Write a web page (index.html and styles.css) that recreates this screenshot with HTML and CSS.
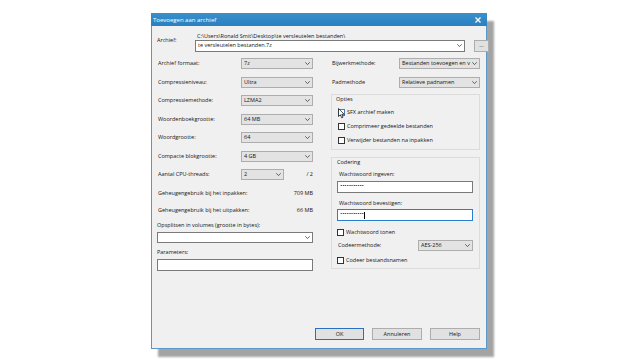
FILE: index.html
```html
<!DOCTYPE html>
<html>
<head>
<meta charset="utf-8">
<link rel="stylesheet" href="styles.css">
</head>
<body>
<div class="stage">
  <div class="dialog">
    <div class="titlebar">
      <span class="title">Toevoegen aan archief</span>
      <svg class="close" viewBox="0 0 6 6" width="6" height="6"><path d="M0.5 0.5 L5.5 5.5 M5.5 0.5 L0.5 5.5"/></svg>
    </div>
    <div class="client">
      <div class="archive">
        <span class="lbl arch-lbl">Archief:</span>
        <div class="arch-main">
          <div class="path">C:\Users\Ronald Smit\Desktop\te versleutelen bestanden\</div>
          <div class="combo edit"><span class="val">te versleutelen bestanden.7z</span><svg class="chev" viewBox="0 0 5 3" width="5" height="3"><polyline points="0.3,0.3 2.5,2.6 4.7,0.3"/></svg></div>
        </div>
        <div class="btn browse">...</div>
      </div>

      <div class="cols">
        <div class="col left">
          <div class="row"><span class="lbl">Archief formaat:</span><div class="combo sel"><span class="val">7z</span><svg class="chev" viewBox="0 0 5 3" width="5" height="3"><polyline points="0.3,0.3 2.5,2.6 4.7,0.3"/></svg></div></div>
          <div class="row"><span class="lbl">Compressieniveau:</span><div class="combo sel"><span class="val">Ultra</span><svg class="chev" viewBox="0 0 5 3" width="5" height="3"><polyline points="0.3,0.3 2.5,2.6 4.7,0.3"/></svg></div></div>
          <div class="row"><span class="lbl">Compressiemethode:</span><div class="combo sel"><span class="val">LZMA2</span><svg class="chev" viewBox="0 0 5 3" width="5" height="3"><polyline points="0.3,0.3 2.5,2.6 4.7,0.3"/></svg></div></div>
          <div class="row"><span class="lbl">Woordenboekgrootte:</span><div class="combo sel"><span class="val">64 MB</span><svg class="chev" viewBox="0 0 5 3" width="5" height="3"><polyline points="0.3,0.3 2.5,2.6 4.7,0.3"/></svg></div></div>
          <div class="row"><span class="lbl">Woordgrootte:</span><div class="combo sel"><span class="val">64</span><svg class="chev" viewBox="0 0 5 3" width="5" height="3"><polyline points="0.3,0.3 2.5,2.6 4.7,0.3"/></svg></div></div>
          <div class="row"><span class="lbl">Compacte blokgrootte:</span><div class="combo sel"><span class="val">4 GB</span><svg class="chev" viewBox="0 0 5 3" width="5" height="3"><polyline points="0.3,0.3 2.5,2.6 4.7,0.3"/></svg></div></div>
          <div class="row"><span class="lbl">Aantal CPU-threads:</span><div class="cpu"><div class="combo sel short"><span class="val">2</span><svg class="chev" viewBox="0 0 5 3" width="5" height="3"><polyline points="0.3,0.3 2.5,2.6 4.7,0.3"/></svg></div><span class="lbl">/ 2</span></div></div>
          <div class="row mem"><span class="lbl">Geheugengebruik bij het inpakken:</span><span class="lbl">709 MB</span></div>
          <div class="row mem2"><span class="lbl">Geheugengebruik bij het uitpakken:</span><span class="lbl">66 MB</span></div>
          <div class="lbl stack-lbl first">Opsplitsen in volumes (grootte in bytes):</div>
          <div class="combo edit full"><span class="val"></span><svg class="chev" viewBox="0 0 5 3" width="5" height="3"><polyline points="0.3,0.3 2.5,2.6 4.7,0.3"/></svg></div>
          <div class="lbl stack-lbl second">Parameters:</div>
          <div class="input full"></div>
        </div>

        <div class="col right">
          <div class="row"><span class="lbl">Bijwerkmethode:</span><div class="combo sel rc"><span class="val">Bestanden toevoegen en v</span><svg class="chev" viewBox="0 0 5 3" width="5" height="3"><polyline points="0.3,0.3 2.5,2.6 4.7,0.3"/></svg></div></div>
          <div class="row"><span class="lbl">Padmethode</span><div class="combo sel rc"><span class="val">Relatieve padnamen</span><svg class="chev" viewBox="0 0 5 3" width="5" height="3"><polyline points="0.3,0.3 2.5,2.6 4.7,0.3"/></svg></div></div>

          <div class="group opties">
            <div class="glabel">Opties</div>
            <div class="chkrow r1"><span class="chk hover"></span><span class="lbl">SFX archief maken</span></div>
            <div class="chkrow r2"><span class="chk"></span><span class="lbl">Comprimeer gedeelde bestanden</span></div>
            <div class="chkrow r3"><span class="chk"></span><span class="lbl">Verwijder bestanden na inpakken</span></div>
            <svg class="cursor" viewBox="0 0 7 11" width="7" height="11"><path d="M0.5 0.5 L0.5 8.5 L2.4 6.8 L3.7 9.8 L5 9.2 L3.8 6.3 L6.2 6.3 Z"/></svg>
          </div>

          <div class="group codering">
            <div class="glabel">Codering</div>
            <div class="lbl pw-lbl first">Wachtwoord ingeven:</div>
            <div class="input pw"><span class="dots">•••••••••••</span></div>
            <div class="lbl pw-lbl second">Wachtwoord bevestigen:</div>
            <div class="input pw focus"><span class="dots">•••••••••••</span><span class="caret"></span></div>
            <div class="chkrow show"><span class="chk"></span><span class="lbl">Wachtwoord tonen</span></div>
            <div class="row method"><span class="lbl">Codeermethode:</span><div class="combo sel mc"><span class="val">AES-256</span><svg class="chev" viewBox="0 0 5 3" width="5" height="3"><polyline points="0.3,0.3 2.5,2.6 4.7,0.3"/></svg></div></div>
            <div class="chkrow names"><span class="chk"></span><span class="lbl">Codeer bestandsnamen</span></div>
          </div>
        </div>
      </div>

      <div class="buttons">
        <div class="btn default">OK</div>
        <div class="btn">Annuleren</div>
        <div class="btn">Help</div>
      </div>
    </div>
  </div>
</div>
</body>
</html>
```

FILE: styles.css
```css
* { box-sizing: border-box; }
html, body { margin: 0; padding: 0; background: #ffffff; }
body {
  width: 640px;
  height: 360px;
  overflow: hidden;
  font-family: "Open Sans", "Noto Sans", sans-serif;
  font-size: 5.5px;
  color: #161616;
}
.stage { padding: 13px 0 0 151px; }
.dialog {
  width: 336px;
  height: 336px;
  display: flex;
  flex-direction: column;
  box-shadow: 7px 8px 2px rgba(0, 0, 0, 0.36);
}
.titlebar {
  height: 13px;
  background: linear-gradient(#3a8fcb, #2a80c0);
  color: #ffffff;
  display: flex;
  align-items: center;
  justify-content: space-between;
  padding: 0 6px 0 2px;
  font-size: 6px;
}
.close { stroke: #ffffff; stroke-width: 1.3; fill: none; }
.client {
  flex: 1;
  background: #f0f0f0;
  border: 1px solid #5b97c8;
  border-top: none;
  padding: 0 6px 0 5px;
  display: flex;
  flex-direction: column;
}
.lbl { white-space: nowrap; line-height: 7px; }

.archive {
  display: grid;
  grid-template-columns: 29px 270px 15px;
  column-gap: 9px;
  padding-top: 6px;
  align-items: end;
}
.arch-lbl { align-self: start; margin-top: 5px; }
.path { line-height: 8px; height: 8px; white-space: nowrap; padding-left: 2px; }
.browse { height: 12px; }

.combo {
  height: 11px;
  border: 1px solid #adadad;
  background: #e3e3e3;
  display: flex;
  align-items: center;
  justify-content: space-between;
  padding: 0 2px 0 2px;
  overflow: hidden;
}
.combo .val { white-space: nowrap; line-height: 7px; }
.combo.edit { background: #ffffff; border-color: #7a7a7a; }
.archive .combo { height: 11.5px; }
.chev { flex: none; stroke: #404040; stroke-width: 0.8; fill: none; margin-left: 2px; }

.cols { display: flex; gap: 18px; margin-top: 3px; }
.col { display: flex; flex-direction: column; }
.col.left { width: 156px; }
.col.right { width: 150px; }
.row {
  height: 18.5px;
  display: flex;
  align-items: center;
  justify-content: space-between;
}
.left .row > .lbl:first-child { padding-left: 1px; }
.left .combo.sel { width: 72px; }
.left .combo.short { width: 43px; }
.cpu { width: 72px; display: flex; justify-content: space-between; align-items: center; }
.row.mem { height: 18px; }
.row.mem2 { height: 17.5px; }
.stack-lbl.first { margin-top: 2.5px; }
.stack-lbl.second { margin-top: 6.5px; }
.combo.full { margin-top: 2.5px; width: 156px; }
.input {
  height: 12px;
  background: #ffffff;
  border: 1px solid #7a7a7a;
  display: flex;
  align-items: center;
  padding-left: 2px;
}
.input.full { margin-top: 2.5px; width: 156px; }
.input.focus { border-color: #2a7fd0; }

.right .row > .lbl:first-child { padding-left: 1px; }
.combo.rc { width: 81px; }

.group {
  border: 1px solid #dcdcdc;
  display: flex;
  flex-direction: column;
  position: relative;
}
.group.opties { margin-top: 2.5px; height: 55.5px; padding: 1px 6px 0 4px; }
.group.codering { margin-top: 7.5px; height: 111.5px; padding: 0.5px 6px 0 5px; }
.glabel { line-height: 7px; }
.chkrow { display: flex; align-items: center; gap: 2px; }
.opties .chkrow { height: 14px; padding-left: 2px; }
.opties .r1 { margin-top: 3px; height: 13px; }
.opties .r3 { margin-top: 0.5px; }
.chk {
  width: 7px;
  height: 7px;
  border: 1px solid #333333;
  background: #ffffff;
  flex: none;
}
.chk.hover { border-color: #3d7fc4; }
.cursor {
  position: absolute;
  left: 6px;
  top: 13px;
  fill: #ffffff;
  stroke: #000000;
  stroke-width: 0.7;
}

.pw-lbl { padding-left: 2px; }
.pw-lbl.first { margin-top: 5px; }
.pw-lbl.second { margin-top: 6.5px; }
.input.pw { margin-top: 3.5px; align-items: flex-start; padding-top: 1px; }
.input.pw.focus { margin-top: 2.5px; }
.dots { font-size: 4px; letter-spacing: -0.2px; line-height: 5px; font-family: "DejaVu Sans", sans-serif; }
.caret { width: 0.8px; height: 7px; background: #000; margin-left: 0.5px; margin-top: 1px; }
.chkrow.show { margin-top: 5px; height: 12px; }
.row.method { height: 11px; margin-top: 1.5px; }
.row.method .lbl { padding-left: 1px; }
.combo.mc { width: 55px; }
.chkrow.names { margin-top: 3.5px; height: 12px; }

.buttons {
  margin-top: auto;
  padding-bottom: 8px;
  display: flex;
  justify-content: flex-end;
  gap: 8px;
}
.btn {
  height: 12px;
  background: #e1e1e1;
  border: 1px solid #adadad;
  display: flex;
  align-items: center;
  justify-content: center;
  line-height: 7px;
}
.buttons .btn { width: 50px; }
.btn.default { border-color: #2a6fc0; width: 49px; }
```
